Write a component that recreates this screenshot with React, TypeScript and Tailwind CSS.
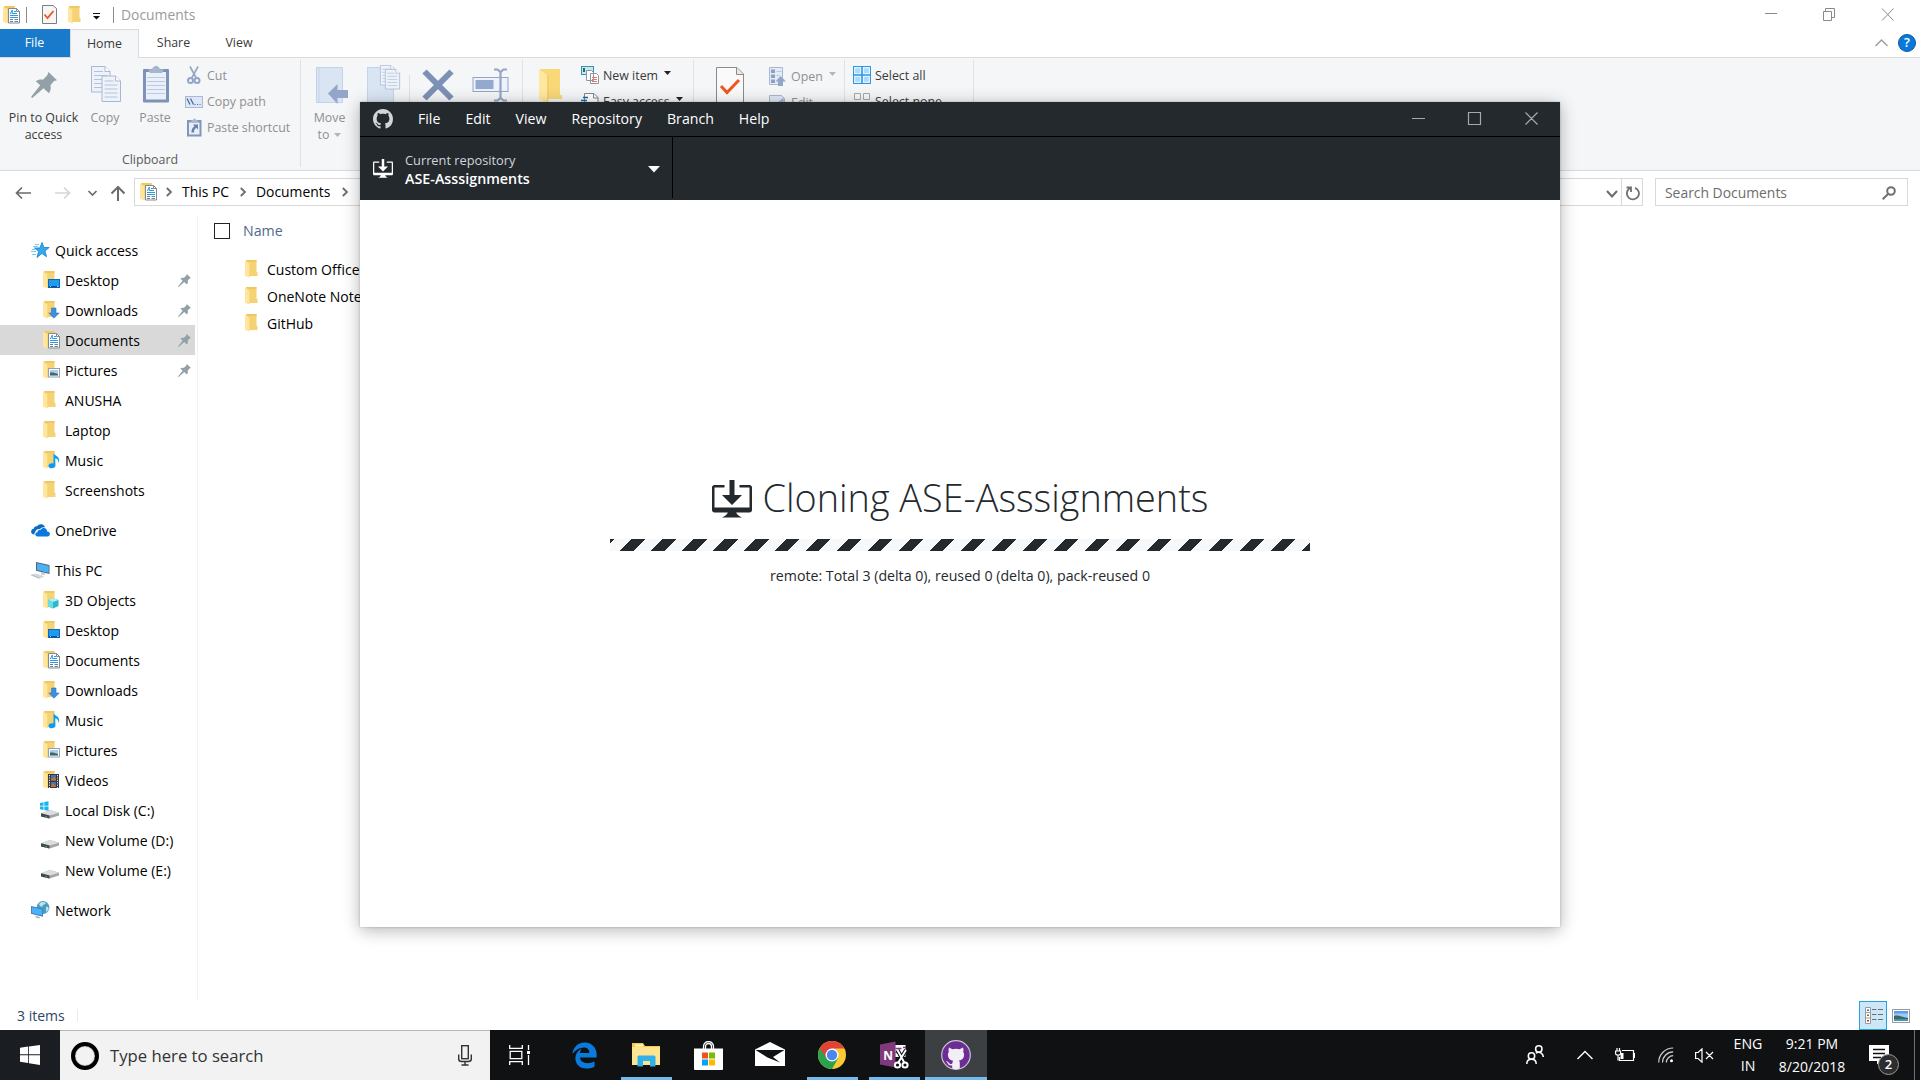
import type { ReactNode } from "react";
import { FaEdgeLegacy } from "react-icons/fa";

const GITHUB_MARK =
  "M8 0C3.58 0 0 3.58 0 8c0 3.54 2.29 6.53 5.47 7.59.4.07.55-.17.55-.38 0-.19-.01-.82-.01-1.49-2.01.37-2.53-.49-2.69-.94-.09-.23-.48-.94-.82-1.13-.28-.15-.68-.52-.01-.53.63-.01 1.08.58 1.23.82.72 1.21 1.87.87 2.33.66.07-.52.28-.87.51-1.07-1.78-.2-3.64-.89-3.64-3.95 0-.87.31-1.59.82-2.15-.08-.2-.36-1.02.08-2.12 0 0 .67-.21 2.2.82.64-.18 1.32-.27 2-.27.68 0 1.36.09 2 .27 1.53-1.04 2.2-.82 2.2-.82.44 1.1.16 1.92.08 2.12.51.56.82 1.27.82 2.15 0 3.07-1.87 3.75-3.65 3.95.29.25.54.73.54 1.48 0 1.07-.01 1.93-.01 2.2 0 .21.15.46.55.38A8.013 8.013 0 0 0 16 8c0-4.42-3.58-8-8-8z";

function DesktopDownload({ className }: { className: string }) {
  return (
    <svg viewBox="0 0 16 16" className={className} fill="currentColor">
      <path d="M4 6h3V0h2v6h3l-4 4-4-4zm11-4h-4v1h4v8H1V3h4V2H1c-.55 0-1 .45-1 1v9c0 .55.45 1 1 1h5.34c-.25.61-.86 1.39-2.34 2h8c-1.48-.61-2.09-1.39-2.34-2H15c.55 0 1-.45 1-1V3c0-.55-.45-1-1-1z" />
    </svg>
  );
}

/* ---------- Explorer icons ---------- */

type FolderKind = "plain" | "desktop" | "downloads" | "documents" | "pictures" | "music" | "objects" | "videos";

function Folder({ kind = "plain" }: { kind?: FolderKind }) {
  return (
    <svg width="17" height="18" viewBox="0 0 17 18" className="shrink-0">
      <path d="M1 0h10.5v11.5l1 .5v4H1z" fill="#f5d274" />
      <path d="M1 0h10.500v2H3z" fill="#efc763" />
      <path d="M0 .4 4 3.200V17.500L0 15.800z" fill="#ffe69c" />
      <path d="M4 3.200V17.500l1-1.500V4z" fill="#f8d983" />
      {kind === "desktop" && (
        <g>
          <rect x="5.500" y="8.500" width="11" height="8" fill="#1d9bf0" stroke="#0b6cb5" />
          <path d="M6 15h10v1.500H6z" fill="#0a4f8a" />
          <path d="M7 15h1v1H7zM14 15h1.500v1H14z" fill="#8fd0ff" />
        </g>
      )}
      {kind === "downloads" && <path d="M8.500 7h4.500v5h3.200L11 17.200 5.800 12h2.700z" fill="#3d8fe0" stroke="#2a77c4" strokeWidth=".6" />}
      {kind === "documents" && (
        <g>
          <path d="M5.500 2.500h8l3 3v11.500h-11z" fill="#fff" stroke="#7f8a93" />
          <path d="M13.500 2.500v3h3" fill="none" stroke="#7f8a93" />
          <path d="M7 9.500h8M7 11.500h8M10 7.500h4M11 5.500h2M7.300 8l2-4v4" stroke="#2e9be0" fill="none" />
          <path d="M7 13.500h3M11.500 13.500h3.500M7 15.500h3M11.500 15.500h3.500" stroke="#5a7388" strokeWidth=".9" />
        </g>
      )}
      {kind === "pictures" && (
        <g>
          <rect x="5.500" y="7.500" width="11" height="8.500" fill="#fff" stroke="#9aa0a6" />
          <rect x="7" y="9" width="8" height="5.500" fill="#a8cdf0" />
          <path d="M7 11.500l3 0 5 1.500v1.500H7z" fill="#3b6a6a" />
        </g>
      )}
      {kind === "music" && (
        <path d="M10.500 2c.4 2.300 5.900 3 5.700 7.500-.100 1.500-.800 2.500-.8 2.500 .300-2.800-1-4.300-3.100-4.700v7.200c0 1.700-1.600 2.700-3.500 2.700-2 0-3.300-.9-3.300-2.300 0-1.500 1.500-2.600 3.500-2.600.6 0 1.100.1 1.500.3z" fill="#0a9cf5" />
      )}
      {kind === "objects" && (
        <g>
          <path d="M5 9l5-2 5.500 2v6L10 17.500 5 15.500z" fill="#2bb8c8" />
          <path d="M5 9l5-2 5.500 2L10 11z" fill="#b5f0f0" />
          <path d="M5 9l5 2v6.500l-5-2z" fill="#6fdde0" />
        </g>
      )}
      {kind === "videos" && (
        <g>
          <rect x="5" y="3" width="11" height="14" fill="#3a3a3a" />
          <rect x="8" y="4" width="5" height="5.500" fill="#3e73c0" />
          <rect x="8" y="11" width="5" height="5" fill="#3e73c0" />
          <path d="M8 8l3-2 2 2v1.500H8zM8 15l2-3 3 4H8z" fill="#c9702c" />
          <path d="M6.500 4v13M14.500 4v13" stroke="#e8e8e8" strokeDasharray="1.200 1.200" />
        </g>
      )}
    </svg>
  );
}

function Drive({ system = false }: { system?: boolean }) {
  return (
    <svg width="19" height="18" viewBox="0 0 19 18" className="shrink-0">
      <path d="M1 12.200 10 9l9 2.800v2.700L9.500 17.500 1 15.500z" fill="#a4a6a8" />
      <path d="M1 12.200 10 9l9 2.800-9.500 2.700z" fill="#dcdde0" />
      <path d="M1 12.200 9.500 14.500v3L1 15.500z" fill="#454749" />
      <path d="M5.500 15.200l1.500.3v.9l-1.500-.3z" fill="#4cd964" />
      {system && <path d="M0 2l3.500-.7v3.400H0zM4.300 1.100 8.500.3v4.400H4.300zM0 5.500h3.500v3.400L0 8.300zM4.300 5.500h4.200v4.300l-4.200-.8z" fill="#17b5f0" />}
    </svg>
  );
}

function Star() {
  return (
    <svg width="19" height="17" viewBox="0 0 19 17" className="shrink-0">
      <path d="M11 .5l1.900 5h5.300l-4.300 3.400 1.700 5.800-4.700-3.200L6 15.500l1.600-6.200L3.500 6h5.300z" fill="#35a8ee" stroke="#1380cc" strokeWidth=".8" />
      <path d="M4 2.500h4M2 4.500h5M1 7.500h3M0 9.500h5M1 12.500h4" stroke="#6cc0f2" strokeWidth=".9" />
    </svg>
  );
}

function OneDrive() {
  return (
    <svg width="19" height="13" viewBox="0 0 19 13" className="shrink-0">
      <path d="M3.500 10.500C1 10.500 0 9 .1 7.500.2 6 1.300 5 2.700 4.800 2.900 3 4.500 2 6 2.300 7 .8 8.600 0 10.300.2c2 .2 3.300 1.500 3.800 3.200-2-.7-4 .1-5 1.600C6.600 4.600 4.600 6 4.400 8c-.9.600-1.200 1.600-.9 2.500z" fill="#0d6cc0" />
      <path d="M6.800 12.500C5 12.500 4.200 11.200 4.400 10c.2-1.200 1-1.700 2-1.800C6.500 6.500 8 5.300 9.700 5.800c1-1.700 2.700-2.200 4.200-1.600 1.500.500 2.200 1.800 2.200 3.200 1.800.1 2.800 1.200 2.800 2.600s-1 2.500-2.500 2.500z" fill="#0a78dc" />
    </svg>
  );
}

function ThisPc() {
  return (
    <svg width="20" height="17" viewBox="0 0 20 17" className="-ml-px shrink-0">
      <path d="M6 0l13.500 3v9L6 8.700z" fill="#4e6478" />
      <path d="M7 1.200l11.700 2.600v7L7 8z" fill="#4db2f5" />
      <path d="M11 10l4 1v1.800h-4z" fill="#c3c8cc" />
      <path d="M0 13l6-1.500 8.500 3L9 16.800z" fill="#d3d7dc" />
      <path d="M1.500 13l8 3" stroke="#aab0b6" strokeWidth=".7" />
    </svg>
  );
}

function NetworkIcon() {
  return (
    <svg width="19" height="18" viewBox="0 0 19 18" className="shrink-0">
      <circle cx="12" cy="6.500" r="6.400" fill="#4a9cc0" />
      <path d="M8 3c2-2.500 5-2.500 7-1-1 2-3 1-3.500 3S8.500 5 8 3zM15 6c2-1 3 1 2.500 3L15 11z" fill="#bfe0e8" />
      <path d="M0 5l12 2.800v8L0 12.800z" fill="#3f7fb5" />
      <path d="M.9 6.200l10.200 2.400v6L.9 12z" fill="#49b2fa" />
      <path d="M4 14.500l5 1.500v1.200H5.500z" fill="#b4bac0" />
    </svg>
  );
}

function Pin({ className }: { className: string }) {
  return (
    <svg viewBox="0 0 26 26" className={className} fill="#92a0a8">
      <path d="M17.500 0 26 8.200l-3 .8-3.500 4.200c.6 3 .2 5.500-1.500 8l-5.500-5L1.300 26 0 25l9.200-11.700L4.800 9.200c2-1.500 4.500-2 7.200-1.500L16.300 3.300z" />
    </svg>
  );
}

const Chevron = () => (
  <svg width="6" height="10" viewBox="0 0 6 10" className="shrink-0" fill="none" stroke="#6b6b6b" strokeWidth="1.800">
    <path d="M.8 1 5 5 .8 9" />
  </svg>
);

const DownTri = ({ color }: { color: string }) => (
  <svg width="7" height="4" viewBox="0 0 7 4" className="shrink-0">
    <path d="M0 0h7L3.500 4z" fill={color} />
  </svg>
);

/* ---------- Explorer chrome ---------- */

function TitleBar() {
  return (
    <header className="flex h-[29px] shrink-0 items-center pl-[3px]">
      <Folder kind="documents" />
      <span className="ml-[6px] h-4 w-px bg-[#8c8c8c]" />
      <svg width="15" height="19" viewBox="0 0 15 19" className="ml-[15px]">
        <path d="M.5.500H11l3.500 3v15H.5z" fill="#f6f6f6" stroke="#7d7d7d" />
        <path d="M2.500 9.500l3 3.500 6-7" fill="none" stroke="#f0561d" strokeWidth="1.800" />
      </svg>
      <span className="ml-[11px] flex"><Folder /></span>
      <svg width="7" height="7" viewBox="0 0 7 7" className="ml-[8px] mt-1">
        <path d="M0 0h7v1H0zM0 3h7L3.500 6.500z" fill="#111" />
      </svg>
      <span className="ml-[13px] h-4 w-px bg-[#8c8c8c]" />
      <span className="mt-px ml-[7px] text-[13.900px] text-[#9a9a9a]">Documents</span>
      <div className="ml-auto flex items-center pr-[26px]">
        <svg width="129" height="13" viewBox="0 0 129 13" fill="none" stroke="#8a8a8a">
          <path d="M0 5.500h12M58.500 3.500h8v9h-8zM60.500 3.500v-3h9v9h-3M117 .5l11.500 12M128.500.5 117 12.500" />
        </svg>
      </div>
    </header>
  );
}

function Tabs() {
  return (
    <nav className="flex h-[29px] shrink-0 border-b border-[#dadbdc] text-[12.400px] text-[#3a3a3a]">
      <div className="flex h-[28px] w-[70px] items-center justify-center bg-[#1979ca] pr-px text-white">File</div>
      <div className="flex h-[29px] w-[69px] items-center justify-center border border-b-0 border-[#dadbdc] bg-[#f5f6f7]">Home</div>
      <div className="flex w-[69px] items-center justify-center">Share</div>
      <div className="flex w-[62px] items-center justify-center">View</div>
      <div className="ml-auto flex items-center gap-[10px] pr-[4px]">
        <svg width="13" height="8" viewBox="0 0 13 8" fill="none" stroke="#9a9a9a" strokeWidth="1.300">
          <path d="M.5 7l6-6 6 6" />
        </svg>
        <span className="flex size-[18px] items-center justify-center rounded-full border border-[#0a5aa8] bg-[#0a78d7] text-[13px] font-semibold text-white">?</span>
      </div>
    </nav>
  );
}

function Sheet({ x, y }: { x: number; y: number }) {
  return (
    <g transform={`translate(${x} ${y})`}>
      <path d="M.5.500H14l5 5v20.500H.5z" fill="#eef3fa" stroke="#a9b7d2" />
      <path d="M14 .5v5h5" fill="#fff" stroke="#a9b7d2" />
      <path d="M3 5.500h9M3 9.500h13M3 13.500h13M3 17.500h13M3 21.500h13" stroke="#b3c2dc" />
    </g>
  );
}

function BigButton({ icon, label, width, muted = true }: { icon: ReactNode; label?: ReactNode; width: string; muted?: boolean }) {
  return (
    <div className={`flex ${width} shrink-0 flex-col items-center ${muted ? "text-[#8f9091]" : "text-[#3a3a3a]"}`}>
      <div className="flex h-[51px] w-full items-start justify-center pt-[7px]">{icon}</div>
      {label && <div className="whitespace-nowrap text-center leading-[17px]">{label}</div>}
    </div>
  );
}

function SmallRow({ icon, label, muted = false, arrow = false }: { icon: ReactNode; label: string; muted?: boolean; arrow?: boolean }) {
  return (
    <div className={`flex h-[26px] items-center whitespace-nowrap ${muted ? "text-[#8f9091]" : "text-[#3a3a3a]"}`}>
      <span className="flex w-[22px] shrink-0 items-center">{icon}</span>
      <span className="mt-[2px]">{label}</span>
      {arrow && <span className="ml-[6px] -mt-[4px] flex"><DownTri color={muted ? "#b5b5b5" : "#222"} /></span>}
    </div>
  );
}

const Divider = () => <div className="mt-[2px] h-[107px] w-px shrink-0 bg-[#e0e1e2]" />;

function Ribbon() {
  return (
    <section className="flex h-[113px] shrink-0 border-b border-[#dadbdc] bg-[#f5f6f7] text-[12.400px]">
      <div className="flex w-[300px] shrink-0 flex-col">
        <div className="flex h-[93px] pl-[2px]">
          <BigButton width="w-[83px]" muted={false} icon={<Pin className="mt-[7px] size-[26px]" />} label={<>Pin to Quick<br />access</>} />
          <BigButton
            width="w-[40px]"
            icon={<svg width="31" height="38" viewBox="0 0 31 38" className="mt-[1px] ml-[2px]"><Sheet x={0} y={0} /><Sheet x={10.500} y={9.500} /></svg>}
            label="Copy"
          />
          <BigButton
            width="w-[60px]"
            icon={
              <svg width="26" height="38" viewBox="0 0 26 38" className="ml-[2px]">
                <rect x="0" y="4" width="26" height="33.500" rx="1" fill="#7e92b8" />
                <rect x="3" y="7" width="20" height="27.500" fill="#e9f0fa" />
                <path d="M5 4.500h4l1-2.500h1.200a2.200 2.200 0 0 1 4 0H16l1 2.500h4L19 8H7z" fill="#a7b5cf" />
                <path d="M4 12.500h18M4 16.500h18M4 20.500h18M4 24.500h18M4 28.500h18" stroke="#bccbe3" />
              </svg>
            }
            label="Paste"
          />
          <div className="flex flex-col pt-[4px]">
            <SmallRow
              muted
              label="Cut"
              icon={
                <svg width="17" height="19" viewBox="0 0 17 19" fill="none" stroke="#93a5c6" className="mx-[1px]">
                  <path d="M4 .5l6.500 12M12 .5 5.500 12.500" strokeWidth="1.600" />
                  <circle cx="4.500" cy="14.500" r="2.500" strokeWidth="2" />
                  <circle cx="11" cy="14.500" r="2.500" strokeWidth="2" />
                </svg>
              }
            />
            <SmallRow
              muted
              label="Copy path"
              icon={
                <svg width="18" height="12" viewBox="0 0 18 12" className="mt-px">
                  <rect x=".5" y=".5" width="17" height="11" fill="#dbe6f6" stroke="#a9b9d6" />
                  <path d="M2 2.500l3 6M5.500 2.500l3 6" stroke="#4d6390" strokeWidth="1.200" />
                  <path d="M9.500 8.500h1M12 8.500h1M14.500 8.500h1" stroke="#4d6390" />
                </svg>
              }
            />
            <SmallRow
              muted
              label="Paste shortcut"
              icon={
                <svg width="15" height="19" viewBox="0 0 15 19" className="ml-[1.500px]">
                  <rect y="2" width="14.500" height="16.500" fill="#8295bb" />
                  <rect x="2" y="4.500" width="10.500" height="12" fill="#e6eefa" />
                  <path d="M3 4.500 5 2h1a1.300 1.300 0 0 1 3 0h1l2 2.500z" fill="#a9b7d2" />
                  <path d="M6 6.500h5v5L9.300 9.800C7.500 11 7 12.500 7 14.500H4.500C4.300 11.500 5.500 9.500 7.600 8.200z" fill="#6a7fa8" />
                </svg>
              }
            />
          </div>
        </div>
        <div className="text-center leading-[18px] text-[#5a5a5a]">Clipboard</div>
      </div>
      <Divider />
      <BigButton
        width="w-[57px]"
        icon={
          <svg width="33" height="38" viewBox="0 0 33 38" className="mt-[2px] ml-[6px]">
            <path d="M0 0h27v36H0z" fill="#dae5f4" />
            <path d="M.5.500h26v35H.5zM3 0v36" fill="none" stroke="#c5d3e9" />
            <path d="M12 26.500 21.500 17v6H32v8H21.500v6z" fill="#93a5c8" />
          </svg>
        }
        label={<>Move<br /><span className="inline-flex items-center gap-[5px]">to <DownTri color="#b5b5b5" /></span></>}
      />
      <BigButton
        width="w-[51px]"
        icon={
          <svg width="34" height="40" viewBox="0 0 34 40">
            <path d="M0 2h27v36H0z" fill="#dae5f4" />
            <path d="M.5 2.500h26v35H.5z" fill="none" stroke="#c5d3e9" />
            <g transform="translate(13 0) scale(.77)"><Sheet x={0} y={0} /></g>
            <g transform="translate(18 4) scale(.77)"><Sheet x={0} y={0} /></g>
          </svg>
        }
      />
      <div className="mt-[17px] h-[80px] w-px bg-[#dfe0e2]" />
      <BigButton
        width="w-[57px]"
        icon={
          <svg width="32" height="32" viewBox="0 0 32 32" className="mt-[4px] mr-[2px]">
            <path d="M2.500 2.500l27 27M29.500 2.500l-27 27" stroke="#7d90b5" strokeWidth="6" />
          </svg>
        }
      />
      <BigButton
        width="w-[55px]"
        icon={
          <svg width="37" height="34" viewBox="0 0 37 34" className="mt-[3px] mr-[9px]" fill="none">
            <rect x="1" y="9.500" width="35" height="14" fill="#eef3fa" stroke="#93a5c8" />
            <rect x="3.500" y="12" width="18" height="9" fill="#93a9cf" />
            <path d="M22 1.500h3.500L28.500 4l3-2.500H35M22 32.500h3.500l3-2.500 3 2.500H35M28.500 3v28" stroke="#93a5c8" strokeWidth="2.200" />
          </svg>
        }
      />
      <Divider />
      <BigButton
        width="w-[58px]"
        icon={
          <svg width="24" height="38" viewBox="0 0 24 38" className="mt-[4px] mr-[2px]">
            <path d="M1 0h20v26h2v4H1z" fill="#f9d878" />
            <path d="M0 0l8 6v28l-8-4z" fill="#ffe8a0" />
            <path d="M8 6v28l2-5V6z" fill="#f5d070" />
          </svg>
        }
      />
      <div className="flex w-[112px] shrink-0 flex-col pt-[4px]">
        <SmallRow
          arrow
          label="New item"
          icon={
            <svg width="18" height="18" viewBox="0 0 18 18" fill="#fff">
              <rect x=".5" y=".5" width="12" height="8" fill="#c4e9f6" stroke="#3f8fb0" />
              <path d="M2 2h2v4H2z" fill="#18735c" />
              <path d="M5.500 4.500h5l2 2v8h-7zM9.500 7.500h6l2 2v8h-8z" stroke="#8f979d" />
              <path d="M11 11.500h5M11 13.500h5M11 15.500h5" stroke="#e4776b" />
            </svg>
          }
        />
        <SmallRow
          arrow
          label="Easy access"
          icon={
            <svg width="18" height="19" viewBox="0 0 18 19" className="mt-[2px]">
              <path d="M3.500.500H13l4 4V18H3.500z" fill="#fff" stroke="#7e8a93" />
              <path d="M12.500.5V5H17" fill="none" stroke="#7e8a93" />
              <path d="M2 4.500h5M0 7.500h6M2 10.500h3" stroke="#1c6aa8" strokeWidth="1.400" />
            </svg>
          }
        />
      </div>
      <Divider />
      <BigButton
        width="w-[75px]"
        icon={
          <svg width="28" height="38" viewBox="0 0 28 38" className="mt-[2px] mr-[3px]">
            <path d="M.5.500H21l6.500 6.500v30H.5z" fill="#fafafa" stroke="#8b8b8b" />
            <path d="M20.500.5v7H27" fill="#e8e8e8" stroke="#8b8b8b" />
            <path d="M5 19l6 6.500L23 13" fill="none" stroke="#f0561d" strokeWidth="3" />
          </svg>
        }
      />
      <div className="flex w-[75px] shrink-0 flex-col pt-[5px]">
        <SmallRow
          muted
          arrow
          label="Open"
          icon={
            <svg width="17" height="19" viewBox="0 0 17 19">
              <path d="M.5.500h13v17H.5z" fill="#e3ebf6" stroke="#a9b7d2" />
              <path d="M2 2.500h4v3.500H2zM2 7.500h4V11H2zM2 12.500h4V16H2z" fill="#8da0c4" />
              <path d="M7.500 4.500h5M7.500 8.500h3" stroke="#b9c6dc" />
              <path d="M11.500 9 17 14.500h-3V19H9v-4.500H6.500z" fill="#93a5c8" />
            </svg>
          }
        />
        <SmallRow
          muted
          label="Edit"
          icon={
            <svg width="17" height="18" viewBox="0 0 17 18" className="mt-[3px]">
              <path d="M.5.500h12l3 3V17H.5z" fill="#dfe8f5" stroke="#a9b7d2" />
              <path d="M5 13l1.500-4L14 3l2 2-7 6.500z" fill="#a3b5d6" />
            </svg>
          }
        />
      </div>
      <Divider />
      <div className="flex w-[128px] shrink-0 flex-col pt-[4px] pl-[8px]">
        <SmallRow
          label="Select all"
          icon={
            <svg width="18" height="18" viewBox="0 0 18 18">
              <path d="M0 0h18v18H0z" fill="#2f96e4" />
              <path d="M1 1h7.200v7.200H1zM9.800 1H17v7.200H9.800zM1 9.800h7.200V17H1zM9.800 9.800H17V17H9.800z" fill="#dff2fe" />
              <path d="M2.200 2.200H7V7H2.200zM11 2.200h4.800V7H11zM2.200 11H7v4.800H2.200zM11 11h4.800v4.800H11z" fill="#a9dcfb" />
            </svg>
          }
        />
        <SmallRow
          label="Select none"
          icon={
            <svg width="18" height="17" viewBox="0 0 18 17" fill="#f8f8f8" stroke="#a7a7a7" className="mt-[1px]">
              <path d="M1.500.500h6v6h-6zM10.500.500h6v6h-6zM1.500 9.500h6v6h-6zM10.500 9.500h6v6h-6z" />
            </svg>
          }
        />
      </div>
      <Divider />
    </section>
  );
}

function AddressBar() {
  return (
    <div className="flex h-[44px] shrink-0 pt-[7px]">
      <svg width="134" height="28" viewBox="0 0 134 28" fill="none" stroke="#6b6b6b" strokeWidth="1.700" className="shrink-0">
        <path d="M31 15H17M22 9.500 16.500 15l5.500 5.500" />
        <path d="M55 15h14M64 9.500l5.500 5.500-5.500 5.500" stroke="#d6d6d6" />
        <path d="M88.500 13l4 4 4-4" />
        <path d="M118 23V9M111.500 15.500 118 9l6.500 6.500" strokeWidth="2" />
      </svg>
      <div className="flex h-[28px] w-[1509px] shrink-0 items-center border border-[#d9d9d9] pl-[5px] text-[13.900px]">
        <Folder kind="documents" />
        <span className="ml-[9px] flex"><Chevron /></span>
        <span className="ml-[10px] w-[47px] whitespace-nowrap">This PC</span>
        <span className="ml-[11px] flex"><Chevron /></span>
        <span className="ml-[10px] w-[74px]">Documents</span>
        <span className="ml-[12px] flex"><Chevron /></span>
        <div className="ml-auto flex h-full items-center">
          <svg width="12" height="8" viewBox="0 0 12 8" fill="none" stroke="#6b6b6b" strokeWidth="2" className="mr-[3px] mt-[3px]">
            <path d="M1 1l5 5.500L11 1" />
          </svg>
          <div className="flex h-full w-[21px] items-center justify-center border-l border-[#d9d9d9]">
            <svg width="14" height="15" viewBox="0 0 14 15" fill="none" stroke="#707070" strokeWidth="1.800" className="mt-[2px] ml-px">
              <path d="M9 1.800a6 6 0 1 1-5.200.5M0.500 1.500H5V6" />
            </svg>
          </div>
        </div>
      </div>
      <div className="ml-[12px] flex h-[28px] w-[253px] items-center justify-between border border-[#d9d9d9] pl-[9px] pr-[11px] text-[13.900px] text-[#6d6d6d]">
        <span className="mt-[2px]">Search Documents</span>
        <svg width="14" height="14" viewBox="0 0 14 14" fill="none" stroke="#707070" strokeWidth="2" className="mt-px">
          <circle cx="9" cy="5" r="3.800" />
          <path d="M6.300 7.700.7 13.300" />
        </svg>
      </div>
    </div>
  );
}

type Row = { label: string; icon: ReactNode; level: 0 | 1 | 2; pinned?: boolean; selected?: boolean; gap?: boolean };

const ROWS: Row[] = [
  { label: "Quick access", icon: <Star />, level: 0 },
  { label: "Desktop", icon: <Folder kind="desktop" />, level: 1, pinned: true },
  { label: "Downloads", icon: <Folder kind="downloads" />, level: 1, pinned: true },
  { label: "Documents", icon: <Folder kind="documents" />, level: 1, pinned: true, selected: true },
  { label: "Pictures", icon: <Folder kind="pictures" />, level: 1, pinned: true },
  { label: "ANUSHA", icon: <Folder />, level: 1 },
  { label: "Laptop", icon: <Folder />, level: 1 },
  { label: "Music", icon: <Folder kind="music" />, level: 1 },
  { label: "Screenshots", icon: <Folder />, level: 1 },
  { label: "OneDrive", icon: <OneDrive />, level: 0, gap: true },
  { label: "This PC", icon: <ThisPc />, level: 0, gap: true },
  { label: "3D Objects", icon: <Folder kind="objects" />, level: 1 },
  { label: "Desktop", icon: <Folder kind="desktop" />, level: 1 },
  { label: "Documents", icon: <Folder kind="documents" />, level: 1 },
  { label: "Downloads", icon: <Folder kind="downloads" />, level: 1 },
  { label: "Music", icon: <Folder kind="music" />, level: 1 },
  { label: "Pictures", icon: <Folder kind="pictures" />, level: 1 },
  { label: "Videos", icon: <Folder kind="videos" />, level: 1 },
  { label: "Local Disk (C:)", icon: <Drive system />, level: 2 },
  { label: "New Volume (D:)", icon: <Drive />, level: 2 },
  { label: "New Volume (E:)", icon: <Drive />, level: 2 },
  { label: "Network", icon: <NetworkIcon />, level: 0, gap: true },
];

const INDENT = ["pl-[31px]", "pl-[43px]", "pl-[40px]"];
const ICON_BOX = ["w-[24px]", "w-[22px]", "w-[25px]"];

function Sidebar() {
  return (
    <aside className="h-[786px] w-[198px] shrink-0 border-r border-[#f3f3f3] pt-[20px]">
      {ROWS.map((row, i) => (
        <div
          key={i}
          className={`flex h-[30px] w-[195px] items-center whitespace-nowrap ${INDENT[row.level]} ${row.gap ? "mt-[10px]" : ""} ${row.selected ? "bg-[#d9d9d9]" : ""}`}
        >
          <span className={`flex shrink-0 items-center ${ICON_BOX[row.level]}`}>{row.icon}</span>
          {row.label}
          {row.pinned && <Pin className="mr-[4px] ml-auto size-[13px]" />}
        </div>
      ))}
    </aside>
  );
}

function FileList() {
  return (
    <main className="flex flex-1 flex-col pt-[8px] pl-[16px]">
      <div className="flex h-[16px] items-center">
        <span className="size-[16px] border border-[#222]" />
        <span className="ml-[13px] text-[14.200px] text-[#51698c]">Name</span>
      </div>
      <div className="mt-[17px] flex flex-col pl-[31px]">
        {["Custom Office Templates", "OneNote Notebooks", "GitHub"].map((name) => (
          <div key={name} className="flex h-[27px] w-[115px] items-center overflow-hidden whitespace-nowrap">
            <span className="-mt-[2px] flex w-[22px] shrink-0"><Folder /></span>
            {name}
          </div>
        ))}
      </div>
    </main>
  );
}

function StatusBar() {
  return (
    <footer className="flex h-[29px] shrink-0 items-center pl-[17px] text-[#2b4668]">
      <span className="w-[60px]">3 items</span>
      <span className="h-[13px] w-px bg-[#ececec]" />
      <div className="ml-auto flex h-full items-center">
        <div className="flex h-full w-[28px] items-center justify-center border border-[#26a0e0] bg-[#cce8f6]">
          <svg width="18" height="17" viewBox="0 0 18 17" fill="none" className="ml-px">
            <path d="M.5.500h5v16h-5zM.5 5.500h5M.5 11h5" stroke="#9a9a9a" fill="#fff" />
            <path d="M2 2.500h2v1.500H2z" fill="#2f6fd0" />
            <path d="M2 7.500h2V9H2z" fill="#6d7f1e" />
            <path d="M2 13h2v1.500H2z" fill="#c53a1a" />
            <path d="M7 2.500h4.500M13 2.500h5M7 7.500h4.500M13 7.500h5M7 12.500h4.500M13 12.500h5" stroke="#6e6e6e" />
          </svg>
        </div>
        <svg width="18" height="14" viewBox="0 0 18 14" className="mr-[10px] ml-[5px]">
          <rect x=".5" y=".5" width="17" height="13" fill="#fff" stroke="#9a9a9a" />
          <rect x="2" y="2" width="14" height="10" fill="#9ccaf5" />
          <path d="M2 2h14v2.500H2z" fill="#5c9ff0" />
          <path d="M2 7c4-1.500 7 1 14 2v1H2z" fill="#3c6b54" />
          <path d="M2 10h14v2H2z" fill="#4a90c8" />
        </svg>
      </div>
    </footer>
  );
}

/* ---------- GitHub Desktop ---------- */

function GitHubWindow() {
  return (
    <div className="absolute left-[360px] top-[102px] flex h-[825px] w-[1200px] flex-col bg-white text-[14px] text-[#24292e] shadow-[0_3px_16px_rgba(0,0,0,0.3),0_0_2px_rgba(0,0,0,0.22)]">
      <div className="flex h-[35px] shrink-0 items-center border-b border-black bg-[#24292e] pl-[13px] text-white">
        <svg width="20" height="20" viewBox="0 0 16 16" fill="#d1d5da"><path d={GITHUB_MARK} /></svg>
        <div className="ml-[25px] flex items-center gap-[25px] text-[14.150px]">
          {["File", "Edit", "View", "Repository", "Branch", "Help"].map((m) => (
            <span key={m}>{m}</span>
          ))}
        </div>
        <svg width="126" height="13" viewBox="0 0 126 13" fill="none" stroke="#a6a9ab" className="mr-[22px] mb-[1px] ml-auto">
          <path d="M0 6.500h13M56.500.500h12v12h-12zM113.500.5l12 12M125.500.5l-12 12" strokeWidth="1.200" />
        </svg>
      </div>
      <div className="flex h-[63px] shrink-0 items-start bg-[#24292e] text-white">
        <div className="flex h-[61px] w-[313px] items-center border-r border-black pl-[13px] pr-[12px]">
          <DesktopDownload className="mt-[3px] size-5" />
          <div className="mt-[3px] ml-[12px] flex flex-col whitespace-nowrap">
            <span className="text-[12.800px] leading-[18px] text-[#d1d5da]">Current repository</span>
            <span className="text-[14.300px] font-semibold leading-[19px]">ASE-Asssignments</span>
          </div>
          <svg width="12" height="7" viewBox="0 0 12 7" className="mt-[3px] ml-auto"><path d="M0 0h12L6 6.500z" fill="#fff" /></svg>
        </div>
      </div>
      <div className="flex flex-1 flex-col items-center pt-[269px]">
        <div className="flex h-[56px] items-center whitespace-nowrap">
          <DesktopDownload className="mt-[5px] mr-[11px] size-[40px]" />
          <h1 className="mt-px text-[37.800px] font-light leading-[56px]">Cloning ASE-Asssignments</h1>
        </div>
        <div className="mt-[14px] h-[12px] w-[700px] bg-[repeating-linear-gradient(135deg,#24292e_0px,#24292e_2.83px,#f6f8fa_2.83px,#f6f8fa_15.2px,#24292e_15.2px,#24292e_21.92px)]" />
        <div className="mt-[15px] text-[14.200px] leading-[20px]">remote: Total 3 (delta 0), reused 0 (delta 0), pack-reused 0</div>
      </div>
    </div>
  );
}

/* ---------- Taskbar ---------- */

function Tile({ children, running = false, active = false }: { children: ReactNode; running?: boolean; active?: boolean }) {
  return (
    <div className={`flex h-[50px] w-[62px] shrink-0 flex-col items-center ${active ? "bg-[#3d4043]" : ""}`}>
      <div className="flex h-[47px] items-center justify-center pt-[3px]">{children}</div>
      {(running || active) && <div className={`h-[3px] bg-[#76b9ed] ${active ? "w-[62px]" : "w-[51px]"}`} />}
    </div>
  );
}

function Taskbar() {
  return (
    <div className="flex h-[50px] shrink-0 bg-[#101113] text-white">
      <div className="flex w-[60px] items-center justify-center bg-[#1a1e23]">
        <svg width="20" height="20" viewBox="0 0 20 20" fill="#fff">
          <path d="M0 2.800 8.200 1.600v7.700H0zM9 1.500 20 0v9.300H9zM0 10.200h8.200V18L0 16.800zM9 10.200h11V20L9 18.200z" />
        </svg>
      </div>
      <div className="flex w-[430px] items-center border-t border-[#b8b8b8] bg-[#f2f2f2] pl-[11px] pr-[18px] text-[#333]">
        <span className="size-[28px] rounded-full border-[4px] border-black shadow-[inset_0_0_1px_#000]" />
        <span className="ml-[11px] text-[16.700px]">Type here to search</span>
        <svg width="14" height="21" viewBox="0 0 14 21" fill="none" stroke="#333" strokeWidth="1.400" className="ml-auto">
          <rect x="3.700" y=".7" width="6.600" height="13" />
          <path d="M.7 9.500V14q0 2.500 3 2.500h6.600q3 0 3-2.500V9.500M7 16.500V20M3.500 20h7" />
        </svg>
      </div>
      <div className="flex w-[63px] items-center pl-[19px]">
        <svg width="21" height="20" viewBox="0 0 21 20" fill="none" stroke="#fff" strokeWidth="1.300">
          <path d="M.7 0v3.300h12.600V0M.7 20v-3.300h12.600V20M1.200 6.300h11.600v7.400H1.200zM19.500 0v5M19.500 10v10" />
          <path d="M18 6h3v3h-3z" fill="#fff" stroke="none" />
        </svg>
      </div>
      <Tile><FaEdgeLegacy size={27} color="#0a7bdc" /></Tile>
      <Tile running>
        <svg width="28" height="24" viewBox="0 0 28 24">
          <path d="M0 0h11l2 3h15v19H0z" fill="#f9c94b" />
          <path d="M0 4h28v18H0z" fill="#fde491" />
          <path d="M3 1.500h8v2H3z" fill="#fff7d5" />
          <path d="M5.500 23.500V14q0-1.500 1.500-1.500h15q1.500 0 1.500 1.500v9.500h-5.500v-5.500h-7v5.500z" fill="#31b1ea" />
        </svg>
      </Tile>
      <Tile>
        <svg width="29" height="29" viewBox="0 0 29 29">
          <path d="M9.500 8V5.500a5 5 0 0 1 10 0V8M11.500 8V6a3 3.500 0 0 1 6 0v2" fill="none" stroke="#fff" strokeWidth="1.300" />
          <path d="M0 7.500h29V28q0 1-1 1H1q-1 0-1-1z" fill="#fff" />
          <path d="M8 11.500h6v6H8z" fill="#f25022" />
          <path d="M15 11.500h6v6h-6z" fill="#7fba00" />
          <path d="M8 18.500h6v6H8z" fill="#00a4ef" />
          <path d="M15 18.500h6v6h-6z" fill="#ffb900" />
        </svg>
      </Tile>
      <Tile>
        <svg width="30" height="24" viewBox="0 0 30 24" className="mb-[2px]">
          <path d="M0 7.500 15 0l15 7.500V24H0z" fill="#fff" />
          <path d="M.5 8h29L18 15l7 5.500L12.500 15.500z" fill="#101113" />
        </svg>
      </Tile>
      <Tile running>
        <svg width="28" height="28" viewBox="0 0 28 28">
          <circle cx="14" cy="14" r="14" fill="#fbc934" />
          <path d="M14 14 1.900 7A14 14 0 0 0 14 28l6-10.500z" fill="#2ba24c" />
          <path d="M14 7.500h12.400A14 14 0 0 0 1.900 7l6.400 10.500z" fill="#e04437" />
          <circle cx="14" cy="14" r="6.500" fill="#fff" />
          <circle cx="14" cy="14" r="5.200" fill="#4a86ee" />
        </svg>
      </Tile>
      <Tile running>
        <svg width="29" height="28" viewBox="0 0 29 28">
          <path d="M0 3.500 15.500.5v26L0 23.500z" fill="#80397b" />
          <text x="3.200" y="18.500" fontSize="12" fontWeight="700" fill="#fff">N</text>
          <path d="M15.500 4h10v12h-10z" fill="#fff" />
          <path d="M15.500 7.500h6M15.500 11.500h5M23 6.500h3" stroke="#80397b" strokeWidth="1.500" />
          <path d="M17.500 9l7 13M26 9 18 22" stroke="#101113" strokeWidth="4" />
          <path d="M17.500 9l7 13M26 9 18 22" stroke="#fff" strokeWidth="1.900" />
          <circle cx="17.500" cy="24" r="2.600" fill="#101113" stroke="#fff" strokeWidth="2" />
          <circle cx="25" cy="24" r="2.600" fill="#101113" stroke="#fff" strokeWidth="2" />
        </svg>
      </Tile>
      <Tile active>
        <svg width="30" height="30" viewBox="0 0 30 30">
          <circle cx="15" cy="15" r="14.300" fill="#6c2d94" stroke="#cfc3d8" strokeWidth="1.200" />
          <path d="M8 7.500l3.500 1.700q3.500-.9 7 0L22 7.500q.8 2 .2 4.200 1.300 2 .8 4.300-.7 3.800-5 4.500.8 1 .8 2.500v5.500q-3.800 1.500-7.600 0V25.500q-3.700.6-4.700-2.500l-1.500-1.700q2-.3 3 1.700 1.200 1.600 3.200.8.2-2 1-3-4.500-.9-5.200-4.800-.4-2.400.8-4.300Q7.200 9.500 8 7.500z" fill="#f3eef6" />
        </svg>
      </Tile>

      <div className="ml-auto flex items-center">
        <svg width="18" height="20" viewBox="0 0 18 20" fill="none" stroke="#fff" strokeWidth="1.500" className="mr-[33px]">
          <circle cx="12.800" cy="4" r="3.200" />
          <circle cx="5.500" cy="11" r="3.200" />
          <path d="M.8 19q0-4.700 4.700-4.700t4.700 4.700M9.800 8.200q3-2 5.500 0 2 1.500 2 3.800" />
        </svg>
        <svg width="16" height="10" viewBox="0 0 16 10" fill="none" stroke="#fff" strokeWidth="1.400" className="mr-[22px]"><path d="M.5 9 8 1.500 15.500 9" /></svg>
        <svg width="20" height="14" viewBox="0 0 20 14" fill="none" stroke="#fff" strokeWidth="1.200" className="mr-[23px]">
          <path d="M7 2.500h11.500v10H4.500V9M18.500 5.500h1.200v4h-1.200M2 0v3M4.500 0v3M.6 3h5v2.500q0 1.500-2.500 1.500T.6 5.500zM3 7v5.500" />
          <path d="M5.500 5h3v6h-3z" fill="#fff" stroke="none" />
        </svg>
        <svg width="16" height="16" viewBox="0 0 16 16" fill="none" stroke="#cfcfcf" strokeWidth="1.200" className="mr-[21px]">
          <path d="M.7 15.500A14.500 14.500 0 0 1 15.200 1M4.500 15.500A10.700 10.700 0 0 1 15.200 4.900M8.300 15.500a7 7 0 0 1 6.900-6.800" />
          <circle cx="13.500" cy="13.700" r="1.500" fill="#fff" stroke="none" />
        </svg>
        <svg width="19" height="15" viewBox="0 0 19 15" fill="none" stroke="#fff" strokeWidth="1.200" className="mr-[17px]">
          <path d="M.6 4.500h2.500L7 .9v13.200l-3.900-3.600H.6zM11 4l7 7M18 4l-7 7" />
        </svg>
        <div className="w-[34px] whitespace-nowrap text-center text-[14.200px] leading-[22px]"><div>ENG</div><div>IN</div></div>
        <div className="ml-[10px] flex w-[74px] flex-col items-center whitespace-nowrap text-[14px] leading-[23px]"><div>9:21 PM</div><div>8/20/2018</div></div>
        <div className="relative mr-[25px] ml-[20px]">
          <svg width="20" height="20" viewBox="0 0 20 20">
            <path d="M0 0h20v16h-8l-4 3.500V16H0z" fill="#fff" />
            <path d="M4 4.500h12M4 8.500h12M4 12.500h8" stroke="#101113" strokeWidth="1.300" />
          </svg>
          <span className="absolute left-[9px] top-[9px] flex size-[21px] items-center justify-center rounded-full border border-[#9a9a9a] bg-[#2b2d2f] text-[13px] font-semibold">2</span>
        </div>
        <div className="h-[50px] w-px bg-[#6f7274]" />
        <div className="w-[5px]" />
      </div>
    </div>
  );
}

export default function App() {
  return (
    <div className="relative flex h-[1080px] w-[1920px] flex-col overflow-hidden bg-white font-['Open_Sans','Noto_Sans',sans-serif] text-[14px] text-black">
      <TitleBar />
      <Tabs />
      <Ribbon />
      <AddressBar />
      <div className="flex h-[786px] shrink-0">
        <Sidebar />
        <FileList />
      </div>
      <StatusBar />
      <Taskbar />
      <GitHubWindow />
    </div>
  );
}
